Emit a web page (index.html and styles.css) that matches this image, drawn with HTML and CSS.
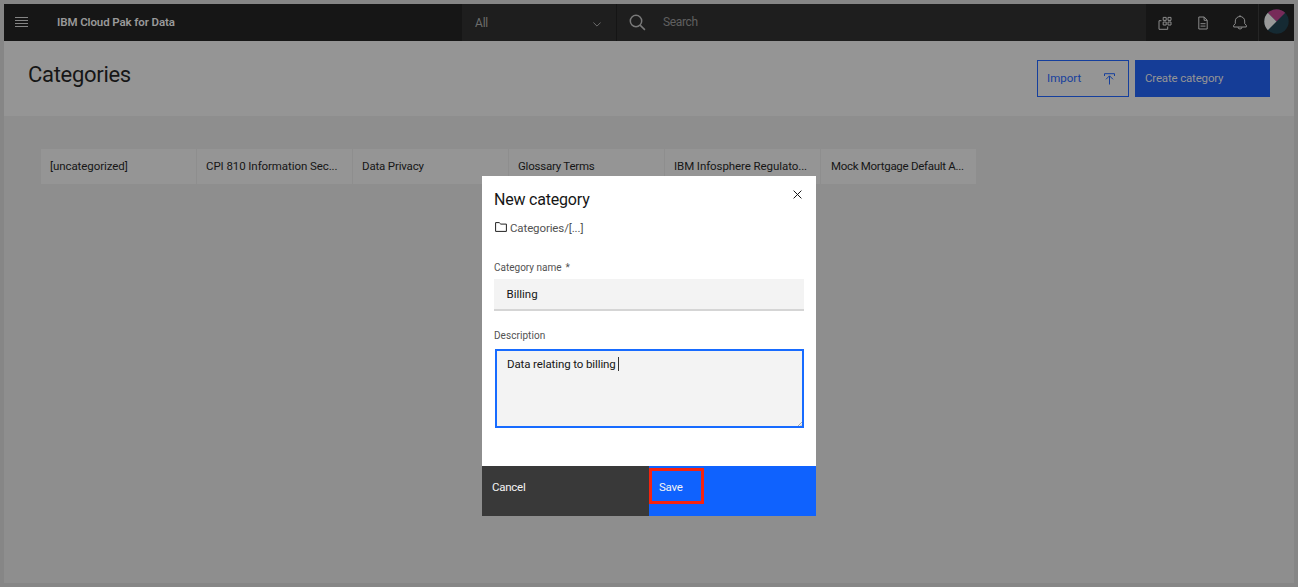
FILE: index.html
```html
<!DOCTYPE html>
<html lang="en">
<head>
<meta charset="utf-8">
<title>Categories</title>
<link rel="stylesheet" href="styles.css">
</head>
<body>
<div class="app">
  <header class="header">
    <button class="menu" aria-label="Menu"><svg width="13" height="10" viewBox="0 0 13 10"><path d="M0 .5h13M0 3.5h13M0 6.5h13M0 9.5h13"/></svg></button>
    <div class="brand"><span class="brand-text">IBM Cloud Pak for Data</span></div>
    <div class="scope"><span class="scope-text">All</span><svg width="8" height="5" viewBox="0 0 8 5"><path d="M.4.5 4 4.1 7.6.5"/></svg></div>
    <div class="search"><svg width="17" height="17" viewBox="0 0 17 17"><circle cx="7" cy="7" r="5.7"/><path d="m11.1 11.1 4.8 4.8"/></svg><span class="search-text">Search</span></div>
    <nav class="tools">
      <svg class="tool" width="14" height="14" viewBox="0 0 14 14"><path d="M3.5 4.7H1v8.6h8.7v-2.8M5.2 1.4h3v3h-3zM10 1.4h3v3h-3zM5.2 6h3v3h-3zM10 6h3v3h-3z"/></svg>
      <svg class="tool" width="10" height="14" viewBox="0 0 10 14"><path d="M6.2 1H.8v12h8.4V4.2zM6.1 1v3.3h3M2.5 7.7h5M2.5 10.1h5"/></svg>
      <svg class="tool bell" width="14" height="15" viewBox="0 0 14 15"><path d="M7 .2v1.3M.7 12h12.6V10.300l-1.600-1.700V6a4.700 4.500 0 0 0-9.400 0v2.600L.7 10.300zM5 12.100a2 1.900 0 0 0 4 0"/></svg>
    </nav>
    <div class="account"><svg width="25" height="25" viewBox="0 0 25 25"><defs><clipPath id="disc"><circle cx="12.500" cy="12.500" r="12.200"/></clipPath></defs><g clip-path="url(#disc)"><path fill="#152a33" d="M0 0h25v25H0z"/><path fill="#772b59" d="M0 0h25L12.500 12.500z"/><path fill="#999" d="M0 0 12.500 12.500 0 25z"/></g></svg></div>
  </header>
  <section class="titlebar">
    <h1 class="page-title">Categories</h1>
    <div class="actions">
      <button class="import"><span class="import-text">Import</span><svg width="11" height="12" viewBox="0 0 11 12"><path d="M.5 3V.7h10V3M5.500 11.500V3M2 6.300 5.500 2.800 9 6.300"/></svg></button>
      <button class="create"><span class="create-text">Create category</span></button>
    </div>
  </section>
  <main class="content">
    <div class="tiles">
      <div class="tile"><span class="t1">[uncategorized]</span></div>
      <div class="tile"><span class="t2">CPI 810 Information Sec...</span></div>
      <div class="tile"><span class="t3">Data Privacy</span></div>
      <div class="tile"><span class="t4">Glossary Terms</span></div>
      <div class="tile"><span class="t5">IBM Infosphere Regulato...</span></div>
      <div class="tile"><span class="t6">Mock Mortgage Default A...</span></div>
    </div>
  </main>
</div>
<div class="modal" role="dialog">
  <div class="modal-body">
    <div class="modal-head"><h2 class="modal-title">New category</h2><svg class="close" width="9" height="9" viewBox="0 0 9 9"><path d="m.6.6 7.800 7.800M8.400.6.6 8.400"/></svg></div>
    <div class="path"><svg width="12" height="10" viewBox="0 0 12 10"><path d="M.6.600h3.600l1.600 1.500h5.600v7.300H.6z"/></svg><span class="path-text">Categories/[...]</span></div>
    <div class="label name-label"><span class="name-text">Category name</span><span class="star">*</span></div>
    <div class="field"><span class="field-text">Billing</span></div>
    <div class="label desc-label"><span class="desc-text">Description</span></div>
    <div class="area"><span class="area-text">Data relating to billing</span><i class="caret"></i><svg class="grip" width="4" height="4" viewBox="0 0 4 4"><path d="M0 4 4 0M2.500 4 4 2.500"/></svg></div>
  </div>
  <div class="modal-foot">
    <button class="cancel"><span class="cancel-text">Cancel</span></button>
    <button class="save"><span class="save-text">Save</span><span class="highlight"></span></button>
  </div>
</div>
</body>
</html>
```
FILE: styles.css
```css
* { box-sizing: border-box; }
body { margin: 0; width: 1298px; height: 587px; overflow: hidden; background: #868686; padding: 4px; font-family: "Roboto", "Liberation Sans", sans-serif; font-size: 11.5px; line-height: 15px; color: #161616; }
button { font: inherit; border: 0; margin: 0; padding: 0; text-align: left; border-radius: 0; }
svg { display: block; fill: none; stroke: currentColor; stroke-width: 1; flex: none; }
span { white-space: nowrap; }
.app { width: 1290px; height: 579px; background: #8e8e8e; display: flex; flex-direction: column; }
.header { height: 37px; background: #161616; color: #959595; display: flex; flex: none; }
.menu { width: 53px; padding: 0 0 1px 11px; background: none; color: #858585; display: flex; align-items: center; }
.brand { width: 405px; padding-top: 11px; font-weight: 600; color: #999; }
.brand-text { letter-spacing: -.1px; }
.scope { width: 155px; padding: 2px 15px 0 13px; background: #1e1e1e; border-right: 1px solid #151515; display: flex; align-items: center; justify-content: space-between; color: #6d6d6d; font-size: 12px; }
.scope-text { letter-spacing: -.2px; }
.scope svg { margin-top: 2px; }
.search { width: 529px; padding-left: 12px; background: #1e1e1e; display: flex; align-items: center; gap: 17px; color: #606060; }
.search svg { stroke: #797979; stroke-width: 1.500; }
.search-text { letter-spacing: -.35px; font-size: 12px; }
.tools { width: 112px; padding: 1px 11px 0 12px; display: flex; align-items: center; justify-content: space-between; color: #8b8b8b; }
.bell { margin-top: -1px; }
.account { width: 36px; border-left: 1px solid #252525; padding: 5px 0 0 5px; }
.account svg { stroke: none; }
.titlebar { height: 75px; flex: none; background: #959595; padding: 19px 24px 0; display: flex; justify-content: space-between; }
.page-title { margin: 1px 0 0; font-size: 22px; line-height: 28px; font-weight: 400; letter-spacing: -.3px; }
.actions { display: flex; gap: 6px; height: 37px; }
.import { width: 91.500px; padding: 0 13px 0 9px; background: none; border: 1px solid #153f9d; color: #153f9d; display: flex; align-items: center; justify-content: space-between; }
.create { width: 135.500px; padding-left: 10.500px; background: #153d97; color: #959595; }
.create-text { letter-spacing: -.17px; }
.content { padding: 33px 37px; }
.tiles { display: grid; grid-template-columns: repeat(6, 156px); height: 35px; }
.tile { background: #959595; border-right: 1px solid #8e8e8e; padding: 10px 0 0 9px; }
.t1, .t2, .t5 { letter-spacing: -.08px; }
.t3 { letter-spacing: -.17px; }
.t4 { letter-spacing: -.23px; }
.t6 { letter-spacing: -.29px; margin-left: 1px; }
.modal { position: absolute; left: 482px; top: 176px; width: 334px; height: 340px; background: #fff; display: flex; flex-direction: column; }
.modal-body { height: 290px; padding: 14px 12px 0; }
.modal-head { display: flex; justify-content: space-between; height: 31px; }
.modal-title { margin: 0; font-size: 16px; line-height: 20px; font-weight: 400; letter-spacing: -.2px; }
.close { margin: 0 2px 0 0; }
.path { display: flex; gap: 3px; height: 15px; color: #525252; }
.path-text { letter-spacing: -.12px; }
.path svg { margin: 1px 0 0 1px; stroke: #222; }
.label { font-size: 10px; color: #525252; }
.name-label { margin-top: 24px; display: flex; gap: 4px; }
.field { margin-top: 4px; height: 32px; padding: 8px 12.500px; background: #f3f3f3; border-bottom: 2px solid #d5d5d5; width: 310px; }
.desc-label { margin-top: 17px; }
.desc-text { letter-spacing: .06px; }
.area { position: relative; margin: 6px 0 0 1px; width: 308.500px; height: 79px; padding: 6px 10px; border: 2px solid #176bff; background: #f3f3f3; display: flex; }
.area-text { letter-spacing: -.11px; }
.caret { width: 1px; height: 14px; background: #333; margin-left: 2px; }
.grip { position: absolute; right: 0; bottom: 0; color: #aaa; }
.modal-foot { display: grid; grid-template-columns: 1fr 1fr; height: 50px; color: #fff; }
.cancel, .save { color: #f4f4f4; padding: 0 0 8px 10px; }
.cancel-text, .save-text { letter-spacing: -.25px; }
.cancel { background: #393939; }
.save { background: #0f62fe; position: relative; }
.highlight { position: absolute; left: 0; top: 2px; width: 55px; height: 36px; border: 3px solid #f5230f; }
```
